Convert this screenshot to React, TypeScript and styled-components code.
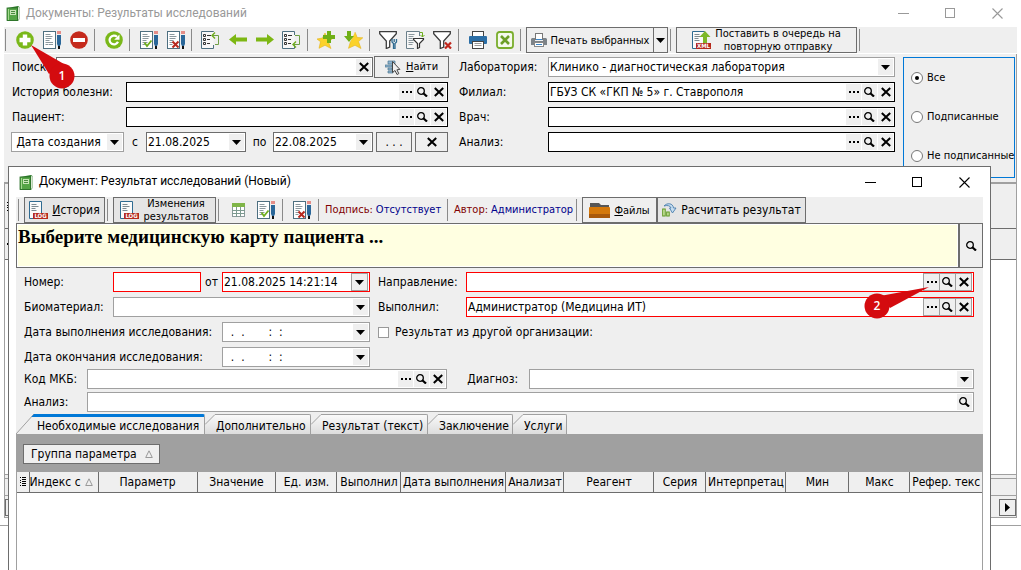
import React from "react";
import styled, { createGlobalStyle, css } from "styled-components";

const face = "#efefef";
const line = "#a0a0a0";
const dark = "#6d6d6d";
const ui = `"DejaVu Sans Condensed", "Tahoma", "DejaVu Sans", sans-serif`;
const titleFont = `Roboto, "Noto Sans", sans-serif`;

const Global = createGlobalStyle`
  *, *::before, *::after { box-sizing: border-box; }
  body { margin: 0; background: #fff; font: 12px/16px ${ui}; color: #000; overflow: hidden; }
  button, input, select { font: inherit; color: inherit; margin: 0; padding: 0; border-radius: 0; }
  svg { display: block; flex: none; }
`;

/* ---------- windows ---------- */

const MainWindow = styled.div`
  position: relative;
  display: flex;
  flex-direction: column;
  min-height: 100vh;
  overflow: hidden;
`;

const TitleBar = styled.header<{ $active?: boolean }>`
  display: flex;
  align-items: center;
  gap: 6px;
  height: ${(p) => (p.$active ? 30 : 27)}px;
  padding-left: ${(p) => (p.$active ? 10 : 6)}px;
  padding-right: ${(p) => (p.$active ? 2 : 0)}px;
  color: ${(p) => (p.$active ? "#000" : "#999")};
  font: 12px/16px ${titleFont};
`;

const TitleText = styled.h1`
  flex: 1;
  margin: 0;
  font: inherit;
  padding-bottom: 2px;
`;

const Controls = styled.div`
  display: flex;
`;

const WindowButton = styled.button`
  display: grid;
  place-items: center;
  width: 47px;
  height: 24px;
  border: 0;
  background: none;
`;

const Dialog = styled.section`
  position: absolute;
  left: 8px;
  right: 30px;
  top: 166px;
  bottom: 0;
  display: flex;
  flex-direction: column;
  border: 1px solid ${dark};
  border-bottom: 0;
  background: #fff;
`;

const DialogBody = styled.div`
  flex: 1;
  display: flex;
  flex-direction: column;
  min-width: 0;
  margin: 0 7px;
  background: ${face};
`;

/* ---------- toolbar ---------- */

const Toolbar = styled.div`
  display: flex;
  align-items: center;
  height: 26px;
  background: ${face};
`;

const MainToolbar = styled(Toolbar)`
  margin: 0 4px;
  padding-left: 1px;
  & > hr:first-child { margin-left: 0; }
`;

const Sep = styled.hr`
  flex: none;
  width: 1px;
  height: 22px;
  margin: 0 5px 0 2px;
  border: 0;
  background: #8a8a8a;
`;

const IconButton = styled.button<{ $wide?: boolean }>`
  flex: none;
  display: grid;
  place-items: center;
  width: ${(p) => (p.$wide ? 28 : 27)}px;
  height: 26px;
  border: 0;
  background: none;
`;

const TextButton = styled.button<{ $w: number; $small?: boolean; $shade?: boolean }>`
  flex: none;
  display: flex;
  align-items: center;
  justify-content: center;
  gap: 4px;
  width: ${(p) => p.$w}px;
  height: 26px;
  border: 1px solid ${dark};
  background: ${(p) => (p.$shade ? "#e5e5e5" : face)};
  text-align: center;
  white-space: nowrap;
  ${(p) => p.$small && css`font-size: 11px; line-height: 13px;`}
`;

const SplitButton = styled.div`
  display: flex;
  width: 142px;
`;

const SplitArrow = styled.button`
  display: grid;
  place-items: center;
  width: 14px;
  height: 26px;
  border: 1px solid ${dark};
  border-left: 0;
  background: ${face};
`;

const Status = styled.span`
  width: 121px;
  padding-left: 1px;
  font-size: 11px;
  white-space: nowrap;
  color: #800000;
  b { font-weight: 400; color: #00008b; margin-left: 3px; }
`;

/* ---------- fields ---------- */

const Box = styled.div<{ $c?: string; $w?: number; $grow?: number }>`
  display: flex;
  align-items: center;
  height: 20px;
  min-width: 0;
  border: 1px solid ${(p) => p.$c || line};
  background: #fff;
  padding-right: 1px;
  flex: ${(p) => (p.$w ? `0 0 ${p.$w}px` : `${p.$grow || 1} 1 0`)};
`;

const Input = styled.input`
  flex: 1;
  min-width: 0;
  height: 16px;
  border: 0;
  outline: 0;
  padding-left: 1px;
  background: transparent;
  white-space: pre;
`;

const Select = styled.select`
  flex: 1;
  min-width: 0;
  height: 16px;
  border: 0;
  outline: 0;
  padding-left: 1px;
  background: transparent;
  appearance: none;
`;

const Mini = styled.button`
  flex: none;
  display: grid;
  place-items: center;
  width: 15px;
  height: 16px;
  border: 0;
  background: ${face};
`;

const MiniGroup = styled.span<{ $edged?: boolean }>`
  flex: none;
  display: flex;
  gap: 1px;
  ${(p) => p.$edged && css`
    padding: 1px;
    background: ${line};
  `}
`;

const Label = styled.label<{ $w?: number }>`
  flex: none;
  white-space: nowrap;
  ${(p) => p.$w && css`width: ${p.$w}px;`}
`;

const Joiner = styled(Label)`
  text-align: center;
`;

const Row = styled.div`
  display: flex;
  align-items: center;
  height: 20px;
  min-width: 0;
`;

const Column = styled.div`
  display: flex;
  flex-direction: column;
  gap: 5px;
  min-width: 0;
`;

const FilterPanel = styled.div`
  display: grid;
  grid-template-columns: 1fr 1fr 109px;
  column-gap: 11px;
  margin: 1px 4px 0;
  padding: 3px 1px 4px 8px;
  border-right: 1px solid ${line};
  background: ${face};
`;

const Radios = styled.fieldset`
  display: flex;
  flex-direction: column;
  justify-content: space-between;
  height: 121px;
  margin: 0 0 0 -3px;
  padding: 12px 0 13px 7px;
  border: 1px solid #0078d7;
  font-size: 11px;
`;

const RadioLabel = styled.label`
  display: flex;
  align-items: center;
  gap: 4px;
  white-space: nowrap;
`;

const Radio = styled.input`
  appearance: none;
  display: grid;
  place-items: center;
  width: 12px;
  height: 12px;
  border: 1px solid #777;
  border-radius: 50%;
  background: #fff;
  &:checked::before { content: ""; width: 4px; height: 4px; border-radius: 50%; background: #000; }
`;

const Check = styled.input`
  appearance: none;
  width: 11px;
  height: 11px;
  margin-right: 6px;
  border: 1px solid #999;
  background: #fff;
`;

const DateRow = styled(Row)`
  margin-left: -1px;
`;

const SmallButton = styled.button<{ $w: number }>`
  display: grid;
  place-items: center;
  flex: none;
  width: ${(p) => p.$w}px;
  height: 20px;
  margin-left: 3px;
  border: 1px solid ${dark};
  background: ${face};
`;

const FindButton = styled.button`
  flex: none;
  display: flex;
  align-items: center;
  justify-content: center;
  gap: 5px;
  width: 75px;
  height: 22px;
  margin: 0 -1px 0 1px;
  border: 1px solid ${dark};
  background: ${face};
  font-size: 11px;
`;

/* ---------- list behind the dialog ---------- */

const List = styled.div`
  flex: 1;
  display: flex;
  flex-direction: column;
  margin: 0 4px;
  border: 1px solid ${line};
  border-top: 2px solid ${line};
`;

const ListBand = styled.div<{ $h: number }>`
  display: flex;
  align-items: center;
  height: ${(p) => p.$h}px;
  padding-left: 2px;
  border-bottom: 1px solid ${dark};
  background: ${face};
`;

const ListSpace = styled.div`
  flex: 1;
`;

const ListFooter = styled.div`
  height: 22px;
  border-top: 1px solid ${line};
  border-bottom: 1px solid ${line};
  background: ${face};
  padding-top: 3px;
  &::before { content: ""; display: block; border-top: 1px solid ${line}; }
`;

const Scroll = styled.div`
  display: flex;
  justify-content: space-between;
  height: 21px;
  padding-top: 3px;
  background: ${face};
`;

const ScrollButton = styled.button`
  display: grid;
  place-items: center;
  width: 17px;
  height: 17px;
  border: 1px solid ${dark};
  background: ${face};
`;

const StatusBar = styled.footer`
  height: 45px;
  margin-top: 7px;
  border-top: 1px solid ${line};
`;

/* ---------- dialog parts ---------- */

const Notice = styled.div`
  display: flex;
  height: 45px;
`;

const NoticeText = styled.h2`
  flex: 1;
  margin: 0;
  padding: 1px;
  border: 1px solid ${dark};
  box-shadow: inset 0 0 0 1px #fff;
  background: #ffffe1;
  font: bold 19px/24px "Liberation Serif", "Times New Roman", serif;
`;

const NoticeButton = styled.button`
  display: grid;
  place-items: center;
  width: 24px;
  border: 1px solid ${dark};
  background: ${face};
`;

const Form = styled.div`
  padding: 4px 9px 2px 8px;
`;

const FormTop = styled.div`
  display: grid;
  grid-template-columns: 346px 1fr;
  column-gap: 8px;
`;

const FormRest = styled.div`
  display: flex;
  flex-direction: column;
  gap: 3px;
  margin-top: 2px;
`;

const Indent = styled.span`
  padding-left: 20px;
`;

const Tabs = styled.div`
  display: flex;
  height: 20px;
`;

const Tab = styled.button<{ $w: number; $on?: boolean }>`
  display: flex;
  width: ${(p) => p.$w}px;
  height: 20px;
  border: 0;
  background: none;
  span {
    flex: 1;
    height: 20px;
    padding-left: ${(p) => (p.$on ? 3 : 1)}px;
    border-top: ${(p) => (p.$on ? "3px solid #0078d7" : `1px solid ${line}`)};
    border-right: 1px solid ${line};
    border-top-right-radius: 2px;
    background: ${(p) => (p.$on ? face : "linear-gradient(#fafafa, #dcdcdc)")};
    line-height: ${(p) => (p.$on ? 18 : 22)}px;
    text-align: left;
    white-space: nowrap;
  }
`;

const GroupBar = styled.div`
  height: 38px;
  padding: 10px 7px;
  background: #a0a0a0;
`;

const GroupButton = styled.button`
  display: flex;
  align-items: center;
  justify-content: space-between;
  width: 137px;
  height: 20px;
  padding: 0 6px 0 7px;
  border: 1px solid ${dark};
  background: ${face};
`;

const GridArea = styled.div`
  flex: 1;
  border: 1px solid ${line};
  border-width: 0 1px;
  background: #fff;
`;

const Table = styled.table`
  width: 100%;
  table-layout: fixed;
  border-collapse: collapse;
`;

const Th = styled.th<{ $w: number; $left?: boolean }>`
  width: ${(p) => p.$w / 9.65}%;
  height: 20px;
  padding: 0;
  border-right: 1px solid ${dark};
  border-bottom: 1px solid ${dark};
  background: ${face};
  font-weight: 400;
  text-align: ${(p) => (p.$left ? "left" : "center")};
  white-space: nowrap;
  &:last-child { border-right: 0; }
`;

const SortCell = styled.div`
  display: flex;
  align-items: center;
  justify-content: space-between;
  padding-right: 5px;
`;

const Center = styled.div`
  display: grid;
  place-items: center;
`;

const Pin = styled.svg<{ $x: number; $y: number }>`
  position: absolute;
  left: ${(p) => p.$x}px;
  top: ${(p) => p.$y}px;
  pointer-events: none;
  font: 600 12px "Open Sans", sans-serif;
`;

/* ---------- icons ---------- */

const Book = () => (
  <svg width="14" height="15" viewBox="0 0 14 15">
    <path d="M1 2 12 0l1.500 1v12L12 15H1z" fill="#2c7a2a" />
    <path d="M12 1v13l1.500-1V1.500z" fill="#d9e8d2" />
    <rect x="1" y="2" width="10.500" height="12.500" fill="#55a546" stroke="#2c6f28" strokeWidth=".8" />
    <rect x="4" y="4" width="6" height="5" fill="#c9e6b8" />
    <path d="M5 5.500h4M5 7.500h4" stroke="#4a8a40" />
    <path d="M2.500 3v11" stroke="#a5d890" />
  </svg>
);
const Minimize = () => <svg width="11" height="11"><path d="M0 5.500h11" stroke="currentColor" /></svg>;
const Maximize = () => <svg width="11" height="11"><rect x=".5" y=".5" width="9" height="9" fill="none" stroke="currentColor" /></svg>;
const Close = () => <svg width="11" height="11"><path d="M.5.5l10 10M10.500.5l-10 10" stroke="currentColor" strokeWidth="1.100" /></svg>;

const PlusCircle = () => (
  <svg width="18" height="18"><circle cx="9" cy="9" r="8.800" fill="#7ab81a" /><path d="M9 3.500v11M3.500 9h11" stroke="#fff" strokeWidth="4.400" /></svg>
);
const MinusCircle = () => (
  <svg width="18" height="18"><circle cx="9" cy="9" r="8.800" fill="#c52a1c" /><path d="M3 9h12" stroke="#fff" strokeWidth="4" /></svg>
);
const Refresh = () => (
  <svg width="18" height="18"><circle cx="9" cy="9" r="8.800" fill="#7ab81a" /><path d="M13 10.800A4.400 4.400 0 1 1 12 5.800" fill="none" stroke="#fff" strokeWidth="2.200" /><path d="M14.500 3.500v5.300H9.200z" fill="#fff" /></svg>
);
const DocPencil = ({ mark }: { mark?: "ok" | "no" }) => (
  <svg width="18" height="18">
    <rect x=".5" y=".5" width="12" height="17" fill="#fff" stroke="#4d6f80" />
    <path d="M2.500 3.500h5M2.500 5.500h7M2.500 7.500h6M2.500 9.500h4M2.500 11.500h5M2.500 13.500h3" stroke="#8b989e" />
    {!mark && <path d="M7 11.500h3M6 13.500h4" stroke="#8b989e" />}
    {mark === "ok" && <path d="M4.500 11.500l2.500 3.500 4.500-5.500" fill="none" stroke="#6fae1d" strokeWidth="1.800" />}
    {mark === "no" && <path d="M5.500 10.500l6 6M11.500 10.500l-6 6" stroke="#b7291f" strokeWidth="2" />}
    <rect x="14" y="0" width="4" height="3" fill="#e58d88" />
    <path d="M14 4h4v9l-1 2h-2l-1-2z" fill="#2b6799" />
    <rect x="15" y="15" width="2" height="3" fill="#111" />
  </svg>
);
const Tree = ({ out }: { out?: boolean }) => (
  <svg width="19" height="18">
    <path d={out ? "M12.500 4V.5H.5v17h12V14" : "M12.500 1V.5H.5v17h12V14"} fill="#f7f7f7" stroke="#4d6f80" />
    <path d="M2.500 3.500h2v2h-2zM2.500 7.500h2v2h-2zM2.500 11.500h2v2h-2z" fill="none" stroke="#333" />
    <path d="M6 4.500h4M6 8.500h3M6 12.500h3" stroke="#333" />
    <path d={out ? "M13 4.500h4.500v9H11" : "M11 4.500h6.500v9H14"} fill="none" stroke="#6f9f45" />
    <path d={out ? "M14 10.500l-3 3 3 3" : "M14 1.500l-3 3 3 3"} fill="none" stroke="#6fae1d" strokeWidth="1.400" />
  </svg>
);
const Arrow = ({ right }: { right?: boolean }) => (
  <svg width="18" height="18"><path d={right ? "M18 8.500l-7-5.500v3.500H0v4h11V14z" : "M0 8.500l7-5.500v3.500h11v4H7V14z"} fill="#7db713" /></svg>
);
const Star = ({ down }: { down?: boolean }) => (
  <svg width="19" height="18">
    <path d={down ? "M11 1l2.200 5.500 5.600.3-4.300 3.800 2.500 6.900-6-3.200-6.500 3 2-6.800" : "M8 2l2.200 5 5.600.3-4.300 3.800 2.500 6.400-6-3.200-6 3 1.500-6.600L0 8l5.500-1z"} fill="#fbd22b" stroke="#e3b21b" strokeWidth=".6" />
    <path d={down ? "M3 0h4v5h3l-5 6-5-6h3z" : "M10 0h4v4h4v4h-4v4h-4V8H6V4h4z"} fill="#6faf16" />
  </svg>
);
const Funnel = ({ kind }: { kind: "tool" | "doc" | "no" }) => (
  <svg width="19" height="18">
    {kind === "doc" ? (
      <>
        <path d="M8 17.500H.5V.5h13V5" fill="#f7f7f7" stroke="#6a7f8a" />
        <path d="M2.500 3.500h6M2.500 5.500h5M2.500 7.500h4M2.500 9.500h5M2.500 11.500h5M2.500 13.500h4" stroke="#8b989e" />
        <path d="M14 1.500h2.500V6M14.500 4l2 2 2-2" fill="none" stroke="#6fae1d" />
        <path d="M7.500 7.500h10v1l-4 4v4l-2 1v-5l-4-4z" fill="#fff" stroke="#333" strokeWidth="1.200" />
      </>
    ) : (
      <path d="M.7.7h16.600v2L10.700 10v6l-3.400 1.500V10L.7 2.700z" fill="#fff" stroke="#3c3c3c" strokeWidth="1.300" />
    )}
    {kind === "tool" && <path d="M13 8v3l1.500 1.500V18h1.500v-5.500L17.500 11V8M15.200 8v3" fill="none" stroke="#2f6b91" strokeWidth="1.300" />}
    {kind === "no" && <path d="M12 11.500l6 6M18 11.500l-6 6" stroke="#c0271d" strokeWidth="2.200" />}
  </svg>
);
const Printer = () => (
  <svg width="18" height="18">
    <rect x="3.500" y=".5" width="11" height="6" fill="#fff" stroke="#444" />
    <rect x="0" y="5" width="18" height="8" rx="1" fill="#2b6ea6" />
    <rect x="3.500" y="10.500" width="11" height="7" fill="#fff" stroke="#444" />
    <path d="M5.500 12.500h7M5.500 14.500h7" stroke="#999" />
  </svg>
);
const SmallPrinter = () => (
  <svg width="16" height="15">
    <rect x="4.500" y=".5" width="7" height="6" fill="#fff" stroke="#777" />
    <path d="M1 5h3v3h8V5h3l1 1v6H0V6z" fill="#7d8388" />
    <rect x="3.500" y="9.500" width="9" height="4" fill="#fff" stroke="#888" />
    <path d="M5 11.500h6" stroke="#3b86c8" />
    <path d="M5 6.500h6" stroke="#3b86c8" />
  </svg>
);
const ExcelX = () => (
  <svg width="18" height="18"><rect x="1" y="1" width="16" height="16" rx="2.500" fill="#f4faec" stroke="#79ad2c" strokeWidth="1.800" /><path d="M5 5l8 8M13 5l-8 8" stroke="#6c9f27" strokeWidth="2.600" /></svg>
);
const DocTag = ({ tag }: { tag: "LOG" | "XML" }) => (
  <svg width="19" height="18">
    <path d="M12.500 12V.5H.5v17h4" fill="#fafafa" stroke="#2f6b91" />
    <path d="M2.500 3.500h5M2.500 5.500h7M2.500 7.500h4M2.500 9.500h5" stroke="#7d8a91" />
    {tag === "XML" && <path d="M13 0l5.500 6H15v7h-4V6H7.500z" fill="#7db828" />}
    <rect x="4" y="12" width="15" height="6" fill="#b4291d" />
    <text x="11.500" y="17.200" fontSize="6" fontWeight="700" fill="#fff" textAnchor="middle">{tag}</text>
  </svg>
);
const FindIcon = () => (
  <svg width="16" height="15">
    <path d="M3 1h7v3H3zM0 5h7v2H0zM3 8h4v2H3zM3 11h5v2H3z" fill="#8fb4cf" stroke="#4b7591" strokeWidth=".7" />
    <path d="M7.500 1.500v11l2.500-2 2 4 1.800-.9-1.900-3.800 3-.4z" fill="#eee" stroke="#444" />
  </svg>
);
const SheetIcon = () => (
  <svg width="13" height="14"><rect x=".5" y=".5" width="12" height="13" fill="#fff" stroke="#8b9a9a" /><rect x="0" y="0" width="13" height="4" fill="#7fb548" /><path d="M0 7.500h13M0 10.500h13M4.500 4v10M8.500 4v10" stroke="#7d9a90" /></svg>
);
const Folder = () => (
  <svg width="21" height="16"><path d="M1 1h9l2 2h8v5H1z" fill="#565656" /><rect x="0" y="5" width="21" height="11" rx="1" fill="#d4780a" /><path d="M0 12h21v4H0z" fill="#a9590a" /></svg>
);
const Calc = () => (
  <svg width="15" height="14"><rect x=".7" y="6" width="2.500" height="7" fill="#cfe7a6" stroke="#5d9720" /><rect x="4.700" y="9" width="2.500" height="4" fill="#cfe7a6" stroke="#5d9720" /><path d="M2 3C5-.5 11 0 11.500 5h2.500l-3.500 5L7.500 5H9C8.500 2.500 5 2 2 3z" fill="#c6ddf0" stroke="#4a7fae" strokeWidth=".9" /></svg>
);
const Down = () => <svg width="9" height="5"><path d="M0 0h9L4.500 5z" fill="#000" /></svg>;
const Dots = () => <svg width="10" height="2"><path d="M0 0h2v2H0zM4 0h2v2H4zM8 0h2v2H8z" fill="#000" /></svg>;
const Loupe = () => <svg width="11" height="10"><circle cx="4" cy="4" r="3.300" fill="none" stroke="#000" strokeWidth="1.300" /><path d="M6 6l4 3.500" stroke="#000" strokeWidth="2.200" /></svg>;
const Cross = () => <svg width="10" height="10"><path d="M.8 1l8.400 8M9.200 1L.8 9" stroke="#000" strokeWidth="2" /></svg>;
const Sort = () => <svg width="8" height="8"><path d="M4 .8L7.300 7.500H.7z" fill="none" stroke="#999" /></svg>;
const Rows = () => <svg width="6" height="9"><path d="M0 .5h1M0 3.500h1M0 5.500h1M0 8.500h1M2 .5h4M2 2.500h4M2 4.500h4M2 6.500h4M2 8.500h4" stroke="#000" /></svg>;

/* ---------- composed controls ---------- */

type LookupProps = { id: string; value?: string; color?: string; edged?: boolean; grow?: number };

const Lookup = ({ id, value = "", color, edged, grow }: LookupProps) => (
  <Box $c={color} $grow={grow}>
    <Input id={id} defaultValue={value} />
    <MiniGroup $edged={edged}>
      <Mini aria-label="Выбрать"><Dots /></Mini>
      <Mini aria-label="Найти"><Loupe /></Mini>
      <Mini aria-label="Очистить"><Cross /></Mini>
    </MiniGroup>
  </Box>
);

type DropProps = { id: string; value?: string; color?: string; w?: number; grow?: number; edged?: boolean; label?: string };

const DateBox = ({ id, value = "", color, w, edged, label }: DropProps) => (
  <Box $c={color} $w={w}>
    <Input id={id} aria-label={label} defaultValue={value} />
    <MiniGroup $edged={edged}><Mini aria-label="Открыть календарь"><Down /></Mini></MiniGroup>
  </Box>
);

const Combo = ({ id, value = "", color, w, grow, label }: DropProps) => (
  <Box $c={color} $w={w} $grow={grow}>
    <Select id={id} aria-label={label}><option>{value}</option></Select>
    <Mini as="span"><Down /></Mini>
  </Box>
);

const WindowButtons = () => (
  <Controls>
    <WindowButton aria-label="Свернуть"><Minimize /></WindowButton>
    <WindowButton aria-label="Развернуть"><Maximize /></WindowButton>
    <WindowButton aria-label="Закрыть"><Close /></WindowButton>
  </Controls>
);

const TabItem = ({ text, w, on }: { text: string; w: number; on?: boolean }) => (
  <Tab $w={w} $on={on} role="tab" aria-selected={!!on}>
    {on ? (
      <svg width="18" height="20">
        <path d="M0 20L18 0v20z" fill={face} />
        <path d="M0 20L18 0" stroke={line} />
        <path d="M18 0v3h-2.700z" fill="#0078d7" />
      </svg>
    ) : (
      <svg width="10" height="20">
        <defs><linearGradient id="tabShade" x1="0" y1="0" x2="0" y2="1"><stop stopColor="#fafafa" /><stop offset="1" stopColor="#dcdcdc" /></linearGradient></defs>
        <path d="M0 20V10.500L10 0v20z" fill="url(#tabShade)" />
        <path d="M0 10.500L10 .5" stroke={line} />
      </svg>
    )}
    <span>{text}</span>
  </Tab>
);

const columns: [string, number][] = [
  ["Параметр", 99], ["Значение", 79], ["Ед. изм.", 61], ["Выполнил", 64], ["Дата выполнения", 105],
  ["Анализат", 58], ["Реагент", 90], ["Серия", 52], ["Интерпретац", 80], ["Мин", 63], ["Макс", 61], ["Рефер. текс", 72],
];

const EntryDialog = () => (
  <Dialog role="dialog" aria-label="Документ">
    <TitleBar $active>
      <Book />
      <TitleText>Документ: Результат исследований (Новый)</TitleText>
      <WindowButtons />
    </TitleBar>
    <DialogBody>
      <Toolbar>
        <Sep />
        <TextButton $w={81} $shade><DocTag tag="LOG" /><span><u>И</u>стория</span></TextButton>
        <Sep />
        <TextButton $w={103} $small $shade><DocTag tag="LOG" /><span>Изменения<br />результатов</span></TextButton>
        <Sep />
        <IconButton $wide aria-label="Таблица"><SheetIcon /></IconButton>
        <IconButton $wide aria-label="Подписать"><DocPencil mark="ok" /></IconButton>
        <Sep />
        <IconButton $wide aria-label="Снять подпись"><DocPencil mark="no" /></IconButton>
        <Sep />
        <Status>Подпись:<b>Отсутствует</b></Status>
        <Sep />
        <Status>Автор:<b>Администратор</b></Status>
        <Sep />
        <TextButton $w={75} $small><Folder /><span><u>Ф</u>айлы</span></TextButton>
        <TextButton $w={149} $shade><Calc />Расчитать результат</TextButton>
      </Toolbar>
      <Notice>
        <NoticeText>Выберите медицинскую карту пациента ...</NoticeText>
        <NoticeButton aria-label="Найти карту"><Loupe /></NoticeButton>
      </Notice>
      <Form>
        <FormTop>
          <Column>
            <Row>
              <Label $w={89} htmlFor="num">Номер:</Label>
              <Box $c="#f00" $w={88}><Input id="num" /></Box>
              <Joiner $w={21} htmlFor="numDate">от</Joiner>
              <DateBox id="numDate" color="#f00" edged value="21.08.2025 14:21:14" />
            </Row>
            <Row><Label $w={89} htmlFor="bio">Биоматериал:</Label><Combo id="bio" /></Row>
            <Row><Label $w={198} htmlFor="done">Дата выполнения исследования:</Label><DateBox id="done" value="  .  .       :  :" /></Row>
            <Row><Label $w={198} htmlFor="end">Дата окончания исследования:</Label><DateBox id="end" value="  .  .       :  :" /></Row>
          </Column>
          <Column>
            <Row><Label $w={88} htmlFor="ref">Направление:</Label><Lookup id="ref" color="#f00" edged /></Row>
            <Row><Label $w={88} htmlFor="by">Выполнил:</Label><Lookup id="by" color="#f00" edged value="Администратор (Медицина ИТ)" /></Row>
            <Row><Check type="checkbox" id="other" /><Label htmlFor="other">Результат из другой организации:</Label></Row>
          </Column>
        </FormTop>
        <FormRest>
          <Row>
            <Label $w={63} htmlFor="mkb">Код МКБ:</Label>
            <Lookup id="mkb" grow={360} />
            <Label $w={82} htmlFor="diag"><Indent>Диагноз:</Indent></Label>
            <Combo id="diag" grow={445} />
          </Row>
          <Row>
            <Label $w={63} htmlFor="an2">Анализ:</Label>
            <Box><Input id="an2" /><Mini aria-label="Найти анализ"><Loupe /></Mini></Box>
          </Row>
        </FormRest>
      </Form>
      <Tabs role="tablist">
        <TabItem on w={189} text="Необходимые исследования" />
        <TabItem w={106} text="Дополнительно" />
        <TabItem w={117} text="Результат (текст)" />
        <TabItem w={85} text="Заключение" />
        <TabItem w={54} text="Услуги" />
      </Tabs>
      <GroupBar><GroupButton>Группа параметра<Sort /></GroupButton></GroupBar>
      <GridArea>
        <Table>
          <thead>
            <tr>
              <Th $w={12}><Center><Rows /></Center></Th>
              <Th $w={69} $left><SortCell>Индекс с<Sort /></SortCell></Th>
              {columns.map(([name, w]) => (
                <Th key={name} $w={w}>{name}</Th>
              ))}
            </tr>
          </thead>
        </Table>
      </GridArea>
    </DialogBody>
  </Dialog>
);

export default function App() {
  return (
    <MainWindow>
      <Global />
      <TitleBar>
        <Book />
        <TitleText>Документы: Результаты исследований</TitleText>
        <WindowButtons />
      </TitleBar>
      <MainToolbar>
        <Sep />
        <IconButton aria-label="Добавить"><PlusCircle /></IconButton>
        <IconButton aria-label="Изменить"><DocPencil /></IconButton>
        <IconButton aria-label="Удалить"><MinusCircle /></IconButton>
        <Sep />
        <IconButton aria-label="Обновить"><Refresh /></IconButton>
        <Sep />
        <IconButton aria-label="Подписать"><DocPencil mark="ok" /></IconButton>
        <IconButton aria-label="Снять подпись"><DocPencil mark="no" /></IconButton>
        <Sep />
        <IconButton aria-label="Свернуть дерево"><Tree /></IconButton>
        <IconButton aria-label="Назад"><Arrow /></IconButton>
        <IconButton aria-label="Вперёд"><Arrow right /></IconButton>
        <IconButton aria-label="Развернуть дерево"><Tree out /></IconButton>
        <Sep />
        <IconButton aria-label="В избранное"><Star /></IconButton>
        <IconButton aria-label="Загрузить избранное"><Star down /></IconButton>
        <Sep />
        <IconButton aria-label="Настроить фильтр"><Funnel kind="tool" /></IconButton>
        <IconButton aria-label="Фильтр списка"><Funnel kind="doc" /></IconButton>
        <IconButton aria-label="Сбросить фильтр"><Funnel kind="no" /></IconButton>
        <Sep />
        <IconButton aria-label="Печать"><Printer /></IconButton>
        <IconButton aria-label="Экспорт в Excel"><ExcelX /></IconButton>
        <Sep />
        <SplitButton>
          <TextButton $w={128} $small><SmallPrinter />Печать выбранных</TextButton>
          <SplitArrow aria-label="Варианты печати"><Down /></SplitArrow>
        </SplitButton>
        <Sep />
        <TextButton $w={181} $small><DocTag tag="XML" /><span>Поставить в очередь на<br />повторную отправку</span></TextButton>
        <Sep />
      </MainToolbar>
      <FilterPanel>
        <Column>
          <Row>
            <Label $w={44} htmlFor="search">Поиск:</Label>
            <Box $c={dark}><Input id="search" /><Mini aria-label="Очистить"><Cross /></Mini></Box>
            <FindButton><FindIcon /><span><u>Н</u>айти</span></FindButton>
          </Row>
          <Row><Label $w={114} htmlFor="hist">История болезни:</Label><Lookup id="hist" color="#000" /></Row>
          <Row><Label $w={114} htmlFor="pat">Пациент:</Label><Lookup id="pat" color="#000" /></Row>
          <DateRow>
            <Combo id="kind" w={113} label="Вид даты" value={"\u00a0Дата создания"} />
            <Joiner $w={22} htmlFor="from">с</Joiner>
            <DateBox id="from" color={dark} w={100} value="21.08.2025" />
            <Joiner $w={27} htmlFor="to">по</Joiner>
            <DateBox id="to" color={dark} w={100} value="22.08.2025" />
            <SmallButton $w={36}>. . .</SmallButton>
            <SmallButton $w={33} aria-label="Очистить даты"><Cross /></SmallButton>
          </DateRow>
        </Column>
        <Column>
          <Row><Label $w={89} htmlFor="lab">Лаборатория:</Label><Combo id="lab" value="Клинико - диагностическая лаборатория" /></Row>
          <Row><Label $w={89} htmlFor="branch">Филиал:</Label><Lookup id="branch" color="#000" value="ГБУЗ СК «ГКП № 5» г. Ставрополя" /></Row>
          <Row><Label $w={89} htmlFor="doc">Врач:</Label><Lookup id="doc" color="#000" /></Row>
          <Row><Label $w={89} htmlFor="an">Анализ:</Label><Lookup id="an" color="#000" /></Row>
        </Column>
        <Radios>
          <RadioLabel><Radio type="radio" name="signed" defaultChecked />Все</RadioLabel>
          <RadioLabel><Radio type="radio" name="signed" />Подписанные</RadioLabel>
          <RadioLabel><Radio type="radio" name="signed" />Не подписанные</RadioLabel>
        </Radios>
      </FilterPanel>
      <List>
        <ListBand $h={45}><Rows /></ListBand>
        <ListBand $h={31}><Dots /></ListBand>
        <ListSpace />
        <ListFooter />
        <Scroll>
          <ScrollButton aria-label="Влево"><svg width="5" height="9"><path d="M5 0v9L0 4.500z" /></svg></ScrollButton>
          <ScrollButton aria-label="Вправо"><svg width="5" height="9"><path d="M0 0v9l5-4.500z" /></svg></ScrollButton>
        </Scroll>
      </List>
      <StatusBar />
      <EntryDialog />
      <Pin $x={30} $y={44} width="46" height="46">
        <path d="M1 1L34 20 19 30z" fill="#d40b0f" />
        <circle cx="32" cy="32" r="12.500" fill="#d40b0f" />
        <text x="32" y="36" fill="#fff" textAnchor="middle">1</text>
      </Pin>
      <Pin $x={864} $y={285} width="66" height="34">
        <path d="M65 2L16 11l10 12z" fill="#d40b0f" />
        <circle cx="13" cy="21" r="12.500" fill="#d40b0f" />
        <text x="13" y="25" fill="#fff" textAnchor="middle">2</text>
      </Pin>
    </MainWindow>
  );
}
